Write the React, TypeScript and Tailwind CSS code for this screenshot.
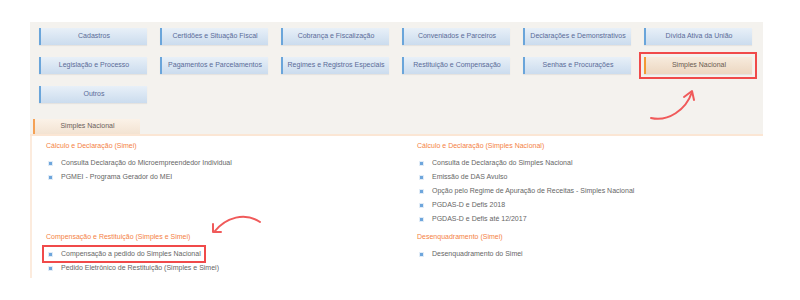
import React from 'react';

const BUTTONS = [
  'Cadastros',
  'Certidões e Situação Fiscal',
  'Cobrança e Fiscalização',
  'Conveniados e Parceiros',
  'Declarações e Demonstrativos',
  'Dívida Ativa da União',
  'Legislação e Processo',
  'Pagamentos e Parcelamentos',
  'Regimes e Registros Especiais',
  'Restituição e Compensação',
  'Senhas e Procurações',
  'Simples Nacional',
  'Outros',
];

const SECTIONS = [
  {
    title: 'Cálculo e Declaração (Simei)',
    items: ['Consulta Declaração do Microempreendedor Individual', 'PGMEI - Programa Gerador do MEI'],
  },
  {
    title: 'Cálculo e Declaração (Simples Nacional)',
    items: [
      'Consulta de Declaração do Simples Nacional',
      'Emissão de DAS Avulso',
      'Opção pelo Regime de Apuração de Receitas - Simples Nacional',
      'PGDAS-D e Defis 2018',
      'PGDAS-D e Defis até 12/2017',
    ],
  },
  {
    title: 'Compensação e Restituição (Simples e Simei)',
    items: ['Compensação a pedido do Simples Nacional', 'Pedido Eletrônico de Restituição (Simples e Simei)'],
  },
  {
    title: 'Desenquadramento (Simei)',
    items: ['Desenquadramento do Simei'],
  },
];

function Bullet() {
  return <span className="w-[3px] h-[3px] bg-[#6ea6dc] shadow-[0_0_0_1px_#e1ecf7] shrink-0" />;
}

export default function App() {
  return (
    <div className="relative w-[800px] h-[300px] bg-white font-['Liberation_Sans',Arial,sans-serif] overflow-hidden">
      <div className="ml-[30px] mt-[22px] w-[733px]">
        {/* category buttons */}
        <div className="bg-[#f4f2ee] pl-[9px] pt-[6px]">
          <div className="grid grid-cols-[repeat(6,108px)] gap-x-[13px] gap-y-[12px]">
            {BUTTONS.map(b => {
              const active = b === 'Simples Nacional';
              return (
                <div
                  key={b}
                  className={`h-[17px] flex items-center justify-center text-[7px] border-l-2 shadow-[0_1px_1px_rgba(0,0,0,0.06)] ${
                    active
                      ? 'bg-gradient-to-b from-[#f7ebdd] to-[#ecd7c1] border-[#f39a35] text-[#6a5a50] outline-2 outline-offset-[3px] outline-[#f04a4a]'
                      : 'bg-gradient-to-b from-[#e8f0f8] to-[#cbdcee] border-[#6aa5da] text-[#5a6b98]'
                  }`}
                >
                  {b}
                </div>
              );
            })}
          </div>
          <div className="h-[16px]" />
          <div className="ml-[-6px] w-[107px] h-[15px] flex items-center justify-center text-[7px] text-[#6a605a] border-l-2 border-[#f5a155] bg-gradient-to-b from-[#fbf2e8] to-[#f3e3d2]">
            Simples Nacional
          </div>
        </div>
        <div className="h-[2px] bg-[#fbe6d4]" />

        {/* content */}
        <div className="border-l-2 border-[#fcebdd] h-[142px] pl-[14px] pt-[3px] grid grid-cols-[371px_1fr] content-start">
          {SECTIONS.map((s, i) => (
            <div key={s.title} className={i >= 2 ? 'pt-[4px]' : ''}>
              <h3 className="text-[7px] leading-[14px] text-[#f47f45] mb-[3px]">{s.title}</h3>
              <ul>
                {s.items.map(it => {
                  const marked = it === 'Compensação a pedido do Simples Nacional';
                  return (
                    <li key={it} className="h-[14px] flex items-center">
                      <span
                        className={`flex items-center gap-[9px] pl-[3px] text-[7px] text-[#666] ${
                          marked ? 'outline-2 outline-offset-[2px] outline-[#f04a4a] pr-[1px]' : ''
                        }`}
                      >
                        <Bullet />
                        {it}
                      </span>
                    </li>
                  );
                })}
              </ul>
            </div>
          ))}
        </div>
      </div>

      {/* annotation arrows */}
      <svg className="absolute left-0 top-0" width="800" height="300" fill="none" stroke="#f05a5a" strokeWidth="2" strokeLinecap="round" strokeLinejoin="round">
        <path d="M651 118 C668 122 686 110 692 92" />
        <path d="M684 97 L692 91 L694 100" />
        <path d="M260 222 C245 212 226 217 214 232" />
        <path d="M213 224 L213 232 L221 232" />
      </svg>
    </div>
  );
}
